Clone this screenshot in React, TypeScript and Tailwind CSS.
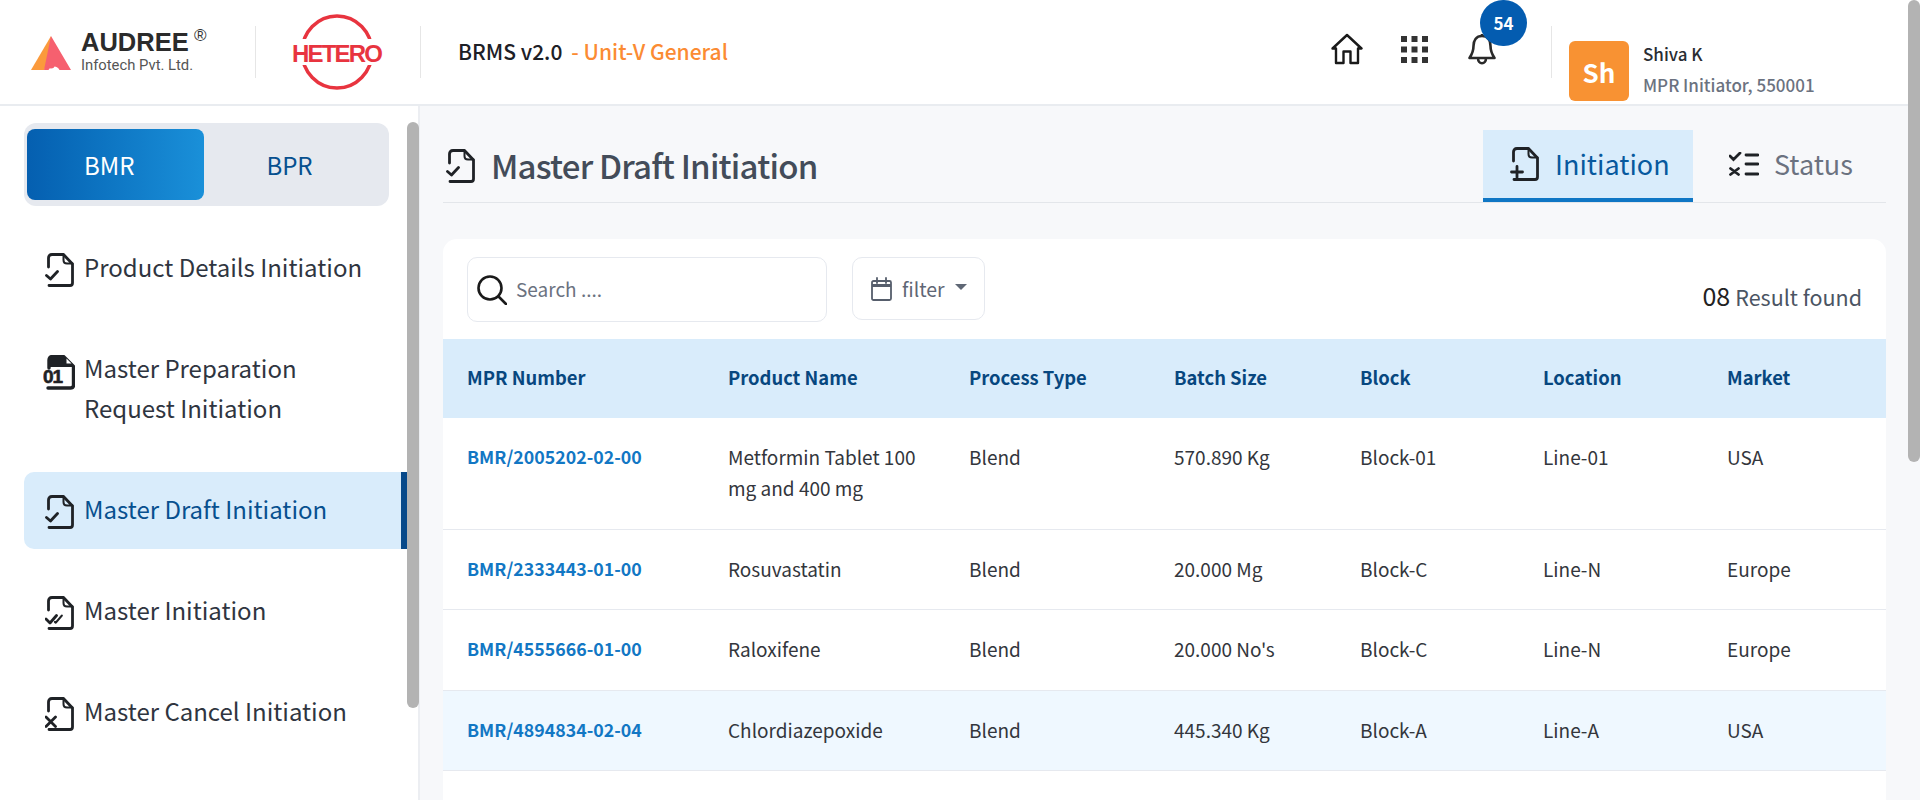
import React from "react";

type Mark = "check" | "double" | "x" | "plus";

function DocIcon({ mark, className }: { mark: Mark; className: string }) {
  return (
    <svg viewBox="0 0 29 34" className={className} fill="none" stroke="#1f2226" strokeWidth="2.800" strokeLinecap="round" strokeLinejoin="round">
      <path d="M3.500 14V5q0-3.500 3.500-3.500h11.500l9 9.500v19q0 2.500-2.500 2.500H4" />
      <path d="M18.500 1.500V7q0 3.500 3.500 3.500h5.500" strokeWidth="2" />
      {mark === "check" && <path d="M1.500 22.500l4 3.500 7-7.500" />}
      {mark === "double" && (
        <>
          <path d="M1 23l4 4 6.500-7.500" />
          <path d="M10 26l.8.6 6-7" strokeWidth="2.200" />
        </>
      )}
      {mark === "x" && <path d="M1 20l9.500 9.500M10.500 20L1 29.500" />}
      {mark === "plus" && <path d="M1.500 25h11M7 19.500v11" />}
    </svg>
  );
}

function BinaryDocIcon() {
  return (
    <svg viewBox="-2 0 32 35" className="ml-[-2px] h-[35px] w-[32px] shrink-0">
      <path d="M4 13V5q0-3.500 3.500-3.500h11l10 10V30q0 3-3 3H3" fill="none" stroke="#1f2226" strokeWidth="3.400" strokeLinecap="round" strokeLinejoin="round" />
      <path d="M4 12V4q0-2 3-2h12v10z" fill="#1f2226" />
      <path d="M19 12V3l9 9z" fill="#1f2226" />
      <path d="M21.500 3.500v5H26.500z" fill="#ffffff" />
      <text x="-2" y="28" fontFamily="'Liberation Sans',sans-serif" fontWeight="700" fontSize="19" fill="#1f2226" stroke="#1f2226" strokeWidth="0.600" textLength="20">01</text>
    </svg>
  );
}

function NavItem({ icon, children, active, top }: { icon: React.ReactNode; children: React.ReactNode; active?: boolean; top?: boolean }) {
  return (
    <div className={active ? "relative flex h-[77px] items-center rounded-l-[10px] bg-[#d9ecfb] pl-[21px] text-[#07508f]" : "flex items-center py-[16.500px] pl-[21px] text-[#2f3540]"}>
      <div className={top ? "mt-[7px] flex w-[39px] shrink-0 self-start" : "mt-[3px] flex w-[39px] shrink-0"}>{icon}</div>
      <div className="pb-[4px] text-[24px] leading-[40px]">{children}</div>
      {active && <div className="absolute inset-y-0 right-0 w-[6px] bg-[#07498a]" />}
    </div>
  );
}

const rows = [
  { id: "BMR/2005202-02-00", name: "Metformin Tablet 100 mg and 400 mg", size: "570.890 Kg", block: "Block-01", loc: "Line-01", market: "USA" },
  { id: "BMR/2333443-01-00", name: "Rosuvastatin", size: "20.000 Mg", block: "Block-C", loc: "Line-N", market: "Europe" },
  { id: "BMR/4555666-01-00", name: "Raloxifene", size: "20.000 No's", block: "Block-C", loc: "Line-N", market: "Europe" },
  { id: "BMR/4894834-02-04", name: "Chlordiazepoxide", size: "445.340 Kg", block: "Block-A", loc: "Line-A", market: "USA", hi: true },
];

const heads = ["MPR Number", "Product Name", "Process Type", "Batch Size", "Block", "Location", "Market"];

export default function App() {
  return (
    <div className="relative h-[800px] w-[1920px] overflow-hidden bg-[#f7f8fa] font-['Noto_Sans_CJK_JP','Noto_Sans',sans-serif]">
      {/* header */}
      <header className="flex h-[106px] items-center border-b-2 border-[#e9ecf0] bg-white">
        <div className="flex w-[255px] shrink-0 items-center pl-[31px]">
          <svg viewBox="0 0 40 34" className="mt-[2px] h-[34px] w-[40px] shrink-0">
            <path d="M20 0L0 34h13l7-12z" fill="#fb9a3c" />
            <path d="M20 0l20 34H28.500a6 6 0 0 0-11 0H13z" fill="#f6606f" />
            <circle cx="20" cy="29" r="3.600" fill="#f6606f" />
          </svg>
          <div className="relative ml-[10px] flex flex-col">
            <span className="font-['Liberation_Sans',sans-serif] text-[25.500px] leading-[25px] font-bold text-[#2b2b2b]">AUDREE</span>
            <span className="mt-[1px] font-['Roboto',sans-serif] text-[14.800px] leading-[18px] whitespace-nowrap text-[#555]">Infotech Pvt. Ltd.</span>
            <span className="absolute top-[-7px] left-[113px] font-['Liberation_Sans',sans-serif] text-[17px] text-[#333]">®</span>
          </div>
        </div>
        <div className="h-[52px] w-px bg-[#e6e6e6]" />
        <div className="flex w-[164px] shrink-0 justify-center">
          <svg viewBox="0 0 94 76" className="h-[76px] w-[94px]">
            <ellipse cx="46" cy="38" rx="35" ry="36" fill="none" stroke="#e8343f" strokeWidth="3.500" />
            <rect x="0" y="25" width="94" height="26" fill="#fff" />
            <text x="1" y="48" fontFamily="'Liberation Sans',sans-serif" fontWeight="700" fontSize="24" fill="#e8343f" textLength="91">HETERO</text>
          </svg>
        </div>
        <div className="h-[52px] w-px bg-[#e6e6e6]" />
        <div className="ml-[37px] text-[21px] font-medium whitespace-nowrap text-[#1d2026]">BRMS v2.0</div>
        <div className="ml-[9px] text-[21px] font-medium whitespace-nowrap text-[#fb8b33]">- Unit-V General</div>
        <div className="flex-1" />
        <svg viewBox="0 0 32 32" className="mb-[6px] h-[32px] w-[32px]" fill="none" stroke="#1a1a1a" strokeWidth="2.400" strokeLinejoin="round">
          <path d="M1.500 15.500L16 2l14.500 13.500H27V30h-7.500V18.500h-7V30H5V15.500z" />
        </svg>
        <svg viewBox="0 0 27 27" className="mb-[6px] ml-[38px] h-[27px] w-[27px]" fill="#333">
          <path d="M0 0h6v6H0zM10.500 0h6v6h-6zM21 0h6v6h-6zM0 10.500h6v6H0zM10.500 10.500h6v6h-6zM21 10.500h6v6h-6zM0 21h6v6H0zM10.500 21h6v6h-6zM21 21h6v6h-6z" />
        </svg>
        <div className="relative mb-[5px] ml-[40px] flex h-[34px] w-[28px]">
          <svg viewBox="0 0 28 34" className="h-[34px] w-[28px]" fill="none" stroke="#2a2a2a" strokeWidth="2.600" strokeLinejoin="round">
            <path d="M14 3c-6 0-8.500 4.500-8.500 10 0 6-2 9-4 12h25c-2-3-4-6-4-12 0-5.500-2.500-10-8.500-10zM14 3V1M10 25c0 7 8 7 8 0" />
          </svg>
          <div className="absolute top-[-33px] left-[12px] flex h-[46px] w-[47px] items-center justify-center rounded-full bg-[#045cb0] text-[17px] font-bold text-white">54</div>
        </div>
        <div className="ml-[55px] h-[52px] w-px bg-[#e6e6e6]" />
        <div className="mt-[38px] ml-[17px] flex h-[60px] w-[60px] shrink-0 items-center justify-center rounded-[6px] bg-[#f89233] text-[26px] font-bold text-white">Sh</div>
        <div className="mt-[38px] ml-[14px] flex w-[277px] shrink-0 flex-col">
          <span className="text-[17px] leading-[28px] font-medium text-[#2a2d33]">Shiva K</span>
          <span className="text-[17px] leading-[34px] font-medium text-[#6b7280]">MPR Initiator, 550001</span>
        </div>
      </header>

      <div className="flex h-[694px]">
        {/* sidebar */}
        <aside className="w-[420px] shrink-0 border-r-2 border-[#eceef2] bg-white pt-[17px] pl-[24px]">
          <div className="flex h-[83px] w-[365px] items-center rounded-[12px] bg-[#e6e9ef] pl-[3px]">
            <div className="flex h-[71px] w-[177px] items-center rounded-[8px] bg-gradient-to-r from-[#055fb0] to-[#1a90d9] pl-[57px] text-[24px] text-white">BMR</div>
            <div className="flex flex-1 justify-center pr-[14px] text-[24px] text-[#07508f]">BPR</div>
          </div>
          <div className="mt-[24px] mr-[11px] flex flex-col gap-[24px]">
            <NavItem icon={<DocIcon mark="check" className="h-[34px] w-[29px]" />}>Product Details Initiation</NavItem>
            <NavItem top icon={<BinaryDocIcon />}>
              Master Preparation
              <br />
              Request Initiation
            </NavItem>
            <NavItem active icon={<DocIcon mark="check" className="h-[34px] w-[29px]" />}>Master Draft Initiation</NavItem>
            <NavItem icon={<DocIcon mark="double" className="h-[34px] w-[29px]" />}>Master Initiation</NavItem>
            <NavItem icon={<DocIcon mark="x" className="h-[34px] w-[29px]" />}>Master Cancel Initiation</NavItem>
          </div>
        </aside>

        {/* main */}
        <main className="min-w-0 flex-1 pt-[24px] pr-[34px] pl-[23px]">
          <div className="flex h-[73px] items-stretch border-b border-[#e3e6ea]">
            <div className="flex items-center pl-[3px]">
              <DocIcon mark="check" className="h-[34px] w-[29px]" />
              <h1 className="ml-[16px] text-[33px] font-medium tracking-[-0.8px] text-[#434c59]">Master Draft Initiation</h1>
            </div>
            <div className="flex-1" />
            <div className="flex w-[210px] items-center border-b-4 border-[#0f76c4] bg-[#d9ecfb] pl-[27px]">
              <DocIcon mark="plus" className="h-[34px] w-[29px]" />
              <span className="ml-[16px] text-[27px] text-[#07599e]">Initiation</span>
            </div>
            <div className="flex w-[193px] items-center pb-[4px] pl-[36px]">
              <svg viewBox="0 0 30 24" className="h-[24px] w-[30px]" fill="none" stroke="#1f2226" strokeWidth="2.800" strokeLinecap="round">
                <path d="M1 4l3.500 3.500L11 1M1.500 16.500l8 6M9.500 16.500l-8 6M17 3h12M17 12h12M17 22h12" />
              </svg>
              <span className="ml-[15px] text-[27px] text-[#6b7280]">Status</span>
            </div>
          </div>

          <div className="mt-[36px] h-[700px] rounded-t-[14px] bg-white">
            <div className="flex h-[100px] items-start px-[24px] pt-[18px]">
              <div className="flex h-[65px] w-[360px] items-center rounded-[10px] border border-[#e6e9ef] pl-[9px]">
                <svg viewBox="0 0 30 30" className="h-[30px] w-[30px]" fill="none" stroke="#1a1a1a" strokeWidth="2.600" strokeLinecap="round">
                  <circle cx="13" cy="13" r="11.500" />
                  <path d="M21.500 21.500L29 29" />
                </svg>
                <span className="ml-[9px] text-[19px] text-[#6b7280]">Search ....</span>
              </div>
              <div className="ml-[25px] flex h-[63px] w-[133px] items-center rounded-[10px] border border-[#e6e9ef] pl-[18px]">
                <svg viewBox="0 0 21 24" className="h-[24px] w-[21px]" fill="none" stroke="#565e6c" strokeWidth="1.800">
                  <rect x="1" y="4" width="19" height="19" rx="1.500" />
                  <path d="M1 8.500h19" strokeWidth="3" />
                  <path d="M6 1v5M15 1v5" strokeLinecap="round" />
                </svg>
                <span className="ml-[10px] text-[19.500px] text-[#5f6775]">filter</span>
                <span className="mt-[-4px] ml-[10px] h-0 w-0 border-x-[6px] border-t-[6px] border-x-transparent border-t-[#5f6775]" />
              </div>
              <div className="flex-1" />
              <div className="mt-[20px] flex items-baseline">
                <span className="text-[25px] text-[#222]">08</span>
                <span className="ml-[5px] text-[21.500px] text-[#4b5563]">Result found</span>
              </div>
            </div>

            <table className="w-full table-fixed border-collapse">
              <colgroup>
                <col className="w-[261px]" />
                <col className="w-[241px]" />
                <col className="w-[205px]" />
                <col className="w-[186px]" />
                <col className="w-[183px]" />
                <col className="w-[184px]" />
                <col />
              </colgroup>
              <thead>
                <tr className="h-[79px] bg-[#d9ecfb]">
                  {heads.map((h) => (
                    <th key={h} className="pb-[2px] pl-[24px] text-left text-[18.400px] font-bold text-[#07477f]">{h}</th>
                  ))}
                </tr>
              </thead>
              <tbody>
                {rows.map((r) => (
                  <tr key={r.id} className={r.hi ? "border-b border-[#e6e9ef] bg-[#eff8ff] align-top" : "border-b border-[#e6e9ef] align-top"}>
                    <td className="pt-[23.300px] pb-[25.300px] pl-[24px] text-[17.800px] leading-[31px] font-bold text-[#1277c4]">{r.id}</td>
                    <td className="pt-[23.300px] pb-[25.300px] pr-[20px] pl-[24px] text-[19px] leading-[31px] text-[#33363c]">{r.name}</td>
                    <td className="pt-[23.300px] pb-[25.300px] pl-[24px] text-[19px] leading-[31px] text-[#33363c]">Blend</td>
                    <td className="pt-[23.300px] pb-[25.300px] pl-[24px] text-[19px] leading-[31px] text-[#33363c]">{r.size}</td>
                    <td className="pt-[23.300px] pb-[25.300px] pl-[24px] text-[19px] leading-[31px] text-[#33363c]">{r.block}</td>
                    <td className="pt-[23.300px] pb-[25.300px] pl-[24px] text-[19px] leading-[31px] text-[#33363c]">{r.loc}</td>
                    <td className="pt-[23.300px] pb-[25.300px] pl-[24px] text-[19px] leading-[31px] text-[#33363c]">{r.market}</td>
                  </tr>
                ))}
              </tbody>
            </table>
          </div>
        </main>
      </div>

      {/* scrollbars */}
      <div className="absolute top-[122px] left-[407px] h-[586px] w-[12px] rounded-full bg-[#b3b3b3]" />
      <div className="absolute top-0 left-[1908px] h-[462px] w-[12px] rounded-full bg-[#b3b3b3]" />
    </div>
  );
}
